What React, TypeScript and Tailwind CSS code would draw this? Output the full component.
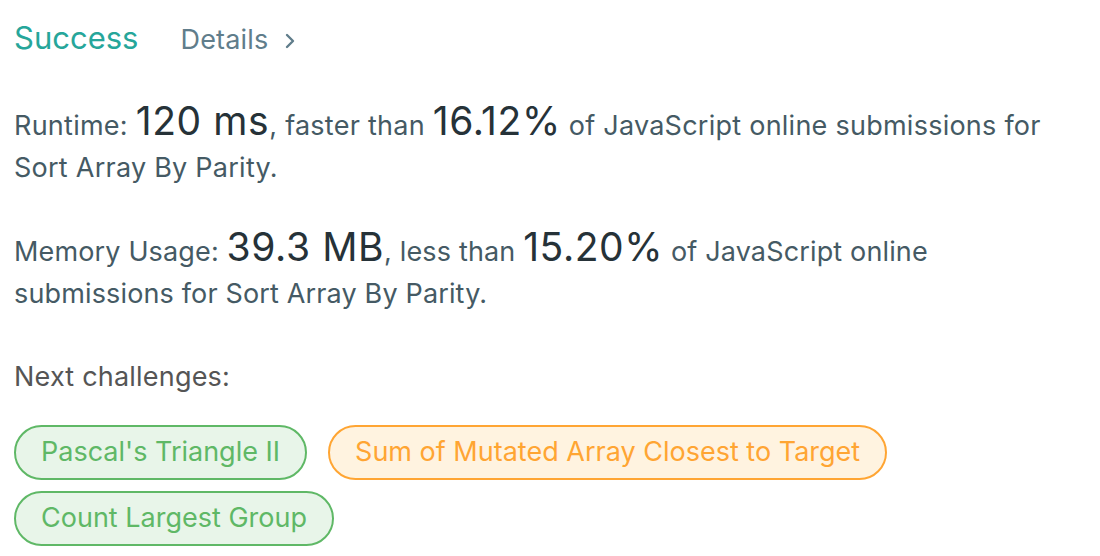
import React from 'react';

const font = { fontFamily: 'Inter, "Noto Sans", sans-serif' };

type Challenge = { title: string; level: 'easy' | 'medium' };

const challenges: Challenge[] = [
  { title: "Pascal's Triangle II", level: 'easy' },
  { title: 'Sum of Mutated Array Closest to Target', level: 'medium' },
  { title: 'Count Largest Group', level: 'easy' },
];

const Tag: React.FC<{ c: Challenge }> = ({ c }) => (
  <span
    className={
      c.level === 'easy'
        ? 'h-[55px] px-[25px] flex items-center rounded-full border-2 border-[#5fb866] bg-[#e8f5e9] text-[#5fb866] text-[27px]'
        : 'h-[55px] px-[25px] flex items-center rounded-full border-2 border-[#ffa533] bg-[#fff3e0] text-[#ffa533] text-[27px]'
    }
  >
    {c.title}
  </span>
);

const Big: React.FC<{ children: React.ReactNode }> = ({ children }) => (
  <span className="text-[39px] tracking-[0.6px] text-[#263238]">{children}</span>
);

export default function App() {
  return (
    <div className="w-[1100px] h-[556px] bg-white pl-[14px] pt-[18px] overflow-hidden" style={font}>
      {/* header */}
      <div className="flex items-baseline">
        <span className="text-[31px] text-[#26a69a] leading-[40px]">Success</span>
        <span className="ml-[42px] text-[27px] tracking-[0.2px] text-[#607d8b]">Details</span>
        <svg className="ml-[15px] w-[12px] h-[16px] self-center mt-[4px]" viewBox="0 0 12 16" fill="none">
          <path d="M3 2l6 6-6 6" stroke="#607d8b" strokeWidth="2.4" strokeLinecap="round" strokeLinejoin="round" />
        </svg>
      </div>

      <p className="mt-[39px] text-[27px] tracking-[0.25px] leading-[42px] text-[#455a64]">
        Runtime: <Big>120 ms</Big>, faster than <Big>16.12%</Big> of JavaScript online submissions for
        <br />
        Sort Array By Parity.
      </p>

      <p className="mt-[37px] text-[27px] tracking-[0.15px] leading-[42px] text-[#455a64]">
        Memory Usage: <Big>39.3 MB</Big>, less than <Big>15.20%</Big> of JavaScript online
        <br />
        submissions for Sort Array By Parity.
      </p>

      <div className="mt-[41px] text-[27px] tracking-[0.2px] leading-[42px] text-[#555555]">Next challenges:</div>

      <div className="mt-[27px] flex flex-wrap gap-x-[21px] gap-y-[11px] w-[900px]">
        {challenges.map(c => (
          <Tag key={c.title} c={c} />
        ))}
      </div>
    </div>
  );
}
